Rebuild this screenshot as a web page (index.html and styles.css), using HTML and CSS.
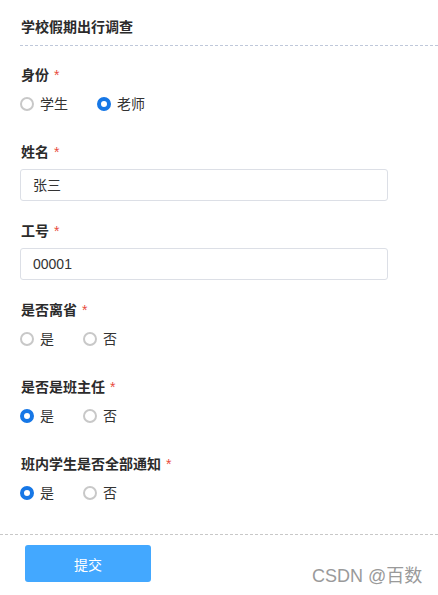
FILE: index.html
```html
<!DOCTYPE html>
<html lang="zh">
<head>
<meta charset="utf-8">
<title>学校假期出行调查</title>
<link rel="stylesheet" href="styles.css">
</head>
<body>
<div class="page">
  <div class="title">学校假期出行调查</div>
  <form class="form">
    <div class="item">
      <div class="label">身份<span class="req">*</span></div>
      <div class="radios">
        <span class="radio"><span class="dot"></span><span class="rtext">学生</span></span>
        <span class="radio"><span class="dot on"></span><span class="rtext">老师</span></span>
      </div>
    </div>
    <div class="item">
      <div class="label">姓名<span class="req">*</span></div>
      <div class="input">张三</div>
    </div>
    <div class="item">
      <div class="label">工号<span class="req">*</span></div>
      <div class="input">00001</div>
    </div>
    <div class="item">
      <div class="label">是否离省<span class="req">*</span></div>
      <div class="radios">
        <span class="radio"><span class="dot"></span><span class="rtext">是</span></span>
        <span class="radio"><span class="dot"></span><span class="rtext">否</span></span>
      </div>
    </div>
    <div class="item">
      <div class="label">是否是班主任<span class="req">*</span></div>
      <div class="radios">
        <span class="radio"><span class="dot on"></span><span class="rtext">是</span></span>
        <span class="radio"><span class="dot"></span><span class="rtext">否</span></span>
      </div>
    </div>
    <div class="item">
      <div class="label">班内学生是否全部通知<span class="req">*</span></div>
      <div class="radios">
        <span class="radio"><span class="dot on"></span><span class="rtext">是</span></span>
        <span class="radio"><span class="dot"></span><span class="rtext">否</span></span>
      </div>
    </div>
  </form>
  <div class="footer">
    <button class="submit" type="button">提交</button>
  </div>
  <div class="watermark">CSDN @百数</div>
</div>
</body>
</html>
```

FILE: styles.css
```css
* { box-sizing: border-box; }
html, body { margin: 0; padding: 0; background: #fff; }
body {
  font-family: "Liberation Sans", "Noto Sans CJK SC", sans-serif;
  font-size: 14px;
  color: #333;
}
.page { position: relative; width: 438px; height: 595px; overflow: hidden; }
.title {
  margin-left: 20px;
  padding: 17px 0 8px 1px;
  line-height: 20px;
  font-weight: bold;
  color: #2b2b2b;
  border-bottom: 1px dashed #bfc8da;
}
.form { display: flex; flex-direction: column; gap: 20px; padding: 19px 0 0 20px; }
.label {
  line-height: 20px;
  font-weight: bold;
  color: #2b2b2b;
  margin-bottom: 7px;
  padding-left: 1px;
}
.req { color: #e84c3d; margin-left: 5px; font-weight: normal; }
.radios { display: flex; padding: 2px 0 8px 0; height: 30px; }
.radio { display: flex; align-items: center; height: 20px; margin-right: 29px; }
.dot {
  width: 14px; height: 14px;
  border-radius: 50%;
  border: 2px solid #c8c8c8;
  background: #fff;
}
.dot.on { border: 4px solid #1677e6; }
.rtext { margin-left: 6px; line-height: 20px; color: #333; }
.input {
  width: 368px; height: 32px;
  border: 1px solid #dcdfe6;
  border-radius: 3px;
  padding-left: 12px;
  line-height: 30px;
  color: #333;
}
.footer {
  margin-top: 23px;
  border-top: 1px dashed #c8c8c8;
  padding: 10px 0 0 25px;
}
.submit {
  width: 126px; height: 37px;
  border: none;
  border-radius: 3px;
  background: #43a8ff;
  color: #fff;
  font-family: "Liberation Sans", "Noto Sans CJK SC", sans-serif;
  font-size: 14px;
  padding: 0;
}
.watermark {
  position: absolute;
  left: 312px;
  top: 564px;
  font-size: 18px;
  line-height: 24px;
  color: #9a9a9a;
}
```
